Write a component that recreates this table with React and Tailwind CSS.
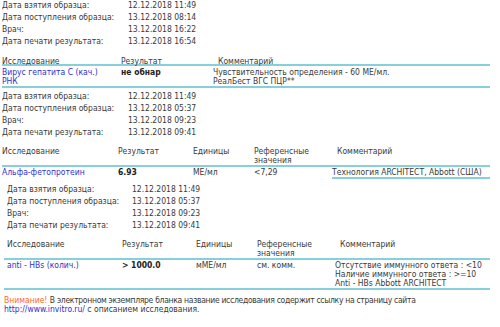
const font = "font-['DejaVu_Sans_Condensed','DejaVu_Sans',sans-serif]";

function InfoRows({ rows, valueX }) {
  return (
    <div>
      {rows.map(([label, value]) => (
        <div key={label} className="flex h-[12px] leading-[12px]">
          <span className={valueX}>{label}</span>
          <span>{value}</span>
        </div>
      ))}
    </div>
  );
}

const info1 = [
  ['Дата взятия образца:', '12.12.2018 11:49'],
  ['Дата поступления образца:', '13.12.2018 08:14'],
  ['Врач:', '13.12.2018 16:22'],
  ['Дата печати результата:', '13.12.2018 16:54'],
];
const info2 = [
  ['Дата взятия образца:', '12.12.2018 11:49'],
  ['Дата поступления образца:', '13.12.2018 05:37'],
  ['Врач:', '13.12.2018 09:23'],
  ['Дата печати результата:', '13.12.2018 09:41'],
];
const info3 = [
  ['Дата взятия образца:', '12.12.2018 11:49'],
  ['Дата поступления образца:', '13.12.2018 05:37'],
  ['Врач:', '13.12.2018 09:23'],
  ['Дата печати результата:', '13.12.2018 09:41'],
];

export default function App() {
  return (
    <div className={`w-[500px] h-[327px] overflow-hidden bg-white text-[#3a3a3a] text-[8.5px] ${font}`}>
      {/* first sample */}
      <div className="mt-[-1px] pl-[2px]">
        <InfoRows rows={info1} valueX="w-[126px]" />
      </div>
      <div className="ml-[2px] w-[488px] mt-[9px] h-[10px] leading-[10px] border-b-2 border-[#86cfdb] grid grid-cols-[119px_92px_277px]">
        <span>Исследование</span>
        <span>Результат</span>
        <span className="pl-[5px]">Комментарий</span>
      </div>
      <div className="ml-[2px] w-[488px] pt-[2px] leading-[9px] border-b-2 border-[#86cfdb] grid grid-cols-[119px_92px_277px]">
        <span className="text-[#3030cc]">Вирус гепатита С (кач.)<br />РНК</span>
        <span className="font-bold text-[#222]">не обнар</span>
        <span>Чувствительность определения - 60 МЕ/мл.<br />РеалБест ВГС ПЦР**</span>
      </div>

      {/* second sample */}
      <div className="mt-[2px] pl-[2px]">
        <InfoRows rows={info2} valueX="w-[126px]" />
      </div>
      <div className="ml-[2px] w-[488px] mt-[9px] leading-[9px] border-b-2 border-[#86cfdb] grid grid-cols-[116px_75px_61px_78px_158px]">
        <span>Исследование</span>
        <span>Результат</span>
        <span>Единицы</span>
        <span>Референсные<br />значения</span>
        <span className="pl-[5px]">Комментарий</span>
      </div>
      <div className="ml-[2px] w-[488px] leading-[9px] grid grid-cols-[116px_75px_61px_78px_158px]">
        <span className="pt-[1px] text-[#3030cc]">Альфа-фетопротеин</span>
        <span className="pt-[1px] font-bold text-[#222]">6.93</span>
        <span className="pt-[1px]">МЕ/мл</span>
        <span className="pt-[1px]">&lt;7,29</span>
        <span className="pt-[1px] border-b-2 border-[#86cfdb]">Технология ARCHITECT, Abbott (США)</span>
      </div>

      {/* third sample */}
      <div className="mt-[4px] pl-[7px]">
        <InfoRows rows={info3} valueX="w-[125px]" />
      </div>
      <div className="ml-[4px] w-[486px] mt-[9px] leading-[9px] border-b-2 border-[#86cfdb] grid grid-cols-[115px_74px_61px_78px_158px] [&>span]:pl-[3px]">
        <span>Исследование</span>
        <span>Результат</span>
        <span>Единицы</span>
        <span>Референсные<br />значения</span>
        <span className="!pl-[8px]">Комментарий</span>
      </div>
      <div className="ml-[4px] w-[486px] pt-[1px] leading-[9px] border-b-2 border-[#86cfdb] grid grid-cols-[115px_74px_61px_78px_158px] [&>span]:pl-[3px]">
        <span className="text-[#3030cc]">anti - HBs (колич.)</span>
        <span className="font-bold text-[#222]">&gt; 1000.0</span>
        <span>мМЕ/мл</span>
        <span>см. комм.</span>
        <span>
          Отсутствие иммунного ответа : &lt;10<br />
          Наличие иммунного ответа : &gt;=10<br />
          Anti - HBs Abbott ARCHITECT
        </span>
      </div>

      {/* footer note */}
      <div className="mt-[6px] pl-[4px] leading-[9px]">
        <span className="text-[#ff6a2a]">Внимание!</span>{' '}
        <span className="tracking-[-0.3px]">В электронном экземпляре бланка название исследования содержит ссылку на страницу сайта</span>
        <br />
        <span className="text-[#3030cc]">http://www.invitro.ru/</span> с описанием исследования.
      </div>
    </div>
  );
}
